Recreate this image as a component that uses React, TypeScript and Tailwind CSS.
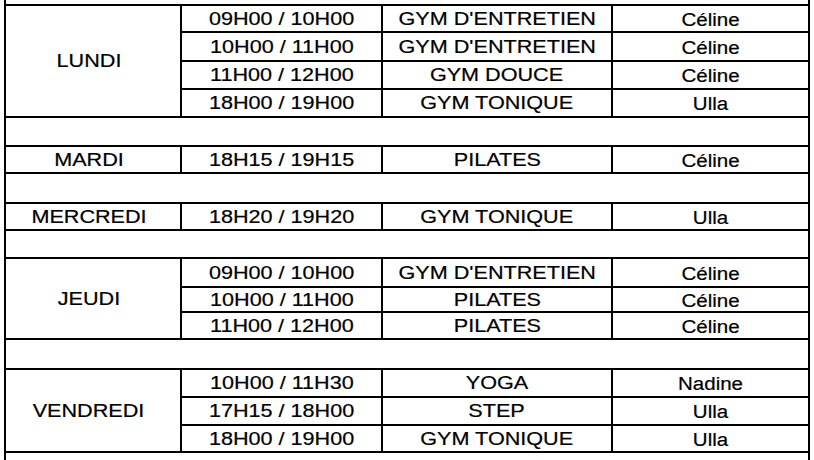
import React from "react";

type Slot = { time: string; activity: string; coach: string };
type Group = { day: string; rows: string; span: string; slots: Slot[] };

const groups: Group[] = [
  {
    day: "LUNDI",
    rows: "grid-rows-[25px_27px_26px_26px]",
    span: "row-span-4",
    slots: [
      { time: "09H00 / 10H00", activity: "GYM D'ENTRETIEN", coach: "Céline" },
      { time: "10H00 / 11H00", activity: "GYM D'ENTRETIEN", coach: "Céline" },
      { time: "11H00 / 12H00", activity: "GYM DOUCE", coach: "Céline" },
      { time: "18H00 / 19H00", activity: "GYM TONIQUE", coach: "Ulla" },
    ],
  },
  {
    day: "MARDI",
    rows: "grid-rows-[25px]",
    span: "row-span-1",
    slots: [{ time: "18H15 / 19H15", activity: "PILATES", coach: "Céline" }],
  },
  {
    day: "MERCREDI",
    rows: "grid-rows-[25px]",
    span: "row-span-1",
    slots: [{ time: "18H20 / 19H20", activity: "GYM TONIQUE", coach: "Ulla" }],
  },
  {
    day: "JEUDI",
    rows: "grid-rows-[27px_23px_25px]",
    span: "row-span-3",
    slots: [
      { time: "09H00 / 10H00", activity: "GYM D'ENTRETIEN", coach: "Céline" },
      { time: "10H00 / 11H00", activity: "PILATES", coach: "Céline" },
      { time: "11H00 / 12H00", activity: "PILATES", coach: "Céline" },
    ],
  },
  {
    day: "VENDREDI",
    rows: "grid-rows-[26px_26px_25px]",
    span: "row-span-3",
    slots: [
      { time: "10H00 / 11H30", activity: "YOGA", coach: "Nadine" },
      { time: "17H15 / 18H00", activity: "STEP", coach: "Ulla" },
      { time: "18H00 / 19H00", activity: "GYM TONIQUE", coach: "Ulla" },
    ],
  },
];

// hauteur des lignes vides entre les jours
const spacers = ["h-[27px]", "h-[28px]", "h-[26px]", "h-[28px]"];

function Cell({ children, className = "" }: { children: React.ReactNode; className?: string }) {
  return (
    <div className={`flex items-center justify-center bg-white ${className}`}>
      <span className="inline-block whitespace-nowrap scale-x-[1.2]">{children}</span>
    </div>
  );
}

export default function App() {
  return (
    <div className="h-[460px] w-[814px] overflow-hidden bg-white font-['Liberation_Sans',Arial,sans-serif] text-[18px] leading-none text-black [-webkit-text-stroke:0.2px_black]">
      <div className="ml-[4px] flex h-full w-[806px] flex-col">
        <div className="h-[4px] border-x-2 border-black" />
        {groups.map((g, i) => (
          <React.Fragment key={g.day}>
            <div className={`grid grid-cols-[174px_199px_228px_195px] ${g.rows} gap-[2px] border-2 border-black bg-black`}>
              <Cell className={`${g.span} pr-[8px]`}>{g.day}</Cell>
              {g.slots.map((s, j) => (
                <React.Fragment key={j}>
                  <Cell className="col-start-2">{s.time}</Cell>
                  <Cell>{s.activity}</Cell>
                  <Cell className="pt-[2px]">
                    <span className="inline-block scale-x-[0.95]">{s.coach}</span>
                  </Cell>
                </React.Fragment>
              ))}
            </div>
            {i < spacers.length && <div className={`${spacers[i]} border-x-2 border-black`} />}
          </React.Fragment>
        ))}
        <div className="flex-1 border-x-2 border-black" />
      </div>
    </div>
  );
}
